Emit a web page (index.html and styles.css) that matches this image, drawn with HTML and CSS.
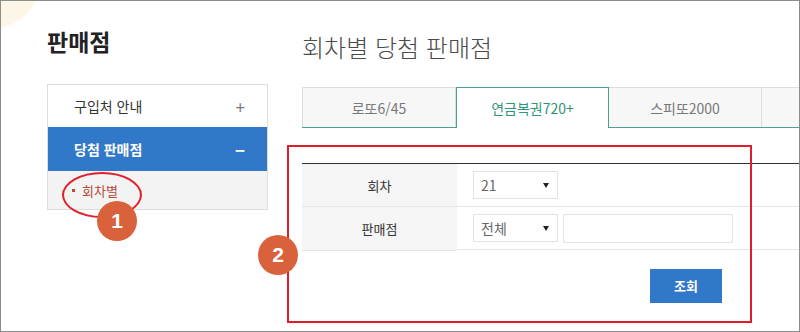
FILE: index.html
```html
<!DOCTYPE html>
<html lang="ko">
<head>
    <meta charset="UTF-8">
    <title>회차별 당첨 판매점</title>
    <link rel="stylesheet" href="styles.css">
</head>
<body>
    <div class="frame">
        <div class="deco"></div>

        <div class="layout">
            <!-- Left menu -->
            <aside class="sidebar">
                <h2 class="side-title">판매점</h2>
                <ul class="side-menu">
                    <li class="menu-item">
                        <span>구입처 안내</span>
                        <span class="sign">+</span>
                    </li>
                    <li class="menu-item active">
                        <span>당첨 판매점</span>
                        <span class="sign">&minus;</span>
                    </li>
                    <li class="submenu">
                        <span class="bullet"></span>회차별
                    </li>
                </ul>
            </aside>

            <!-- Content -->
            <main class="content">
                <h1 class="page-title">회차별 당첨 판매점</h1>

                <div class="tabs">
                    <div class="tab first">로또6/45</div>
                    <div class="tab active">연금복권720+</div>
                    <div class="tab">스피또2000</div>
                    <div class="tab"></div>
                </div>

                <table class="search-table">
                    <tr>
                        <th>회차</th>
                        <td>
                            <div class="select">21<span class="caret"></span></div>
                        </td>
                    </tr>
                    <tr>
                        <th>판매점</th>
                        <td class="row-fields">
                            <div class="select">전체<span class="caret"></span></div>
                            <input type="text" class="text-input">
                        </td>
                    </tr>
                </table>

                <div class="actions">
                    <button class="btn-search">조회</button>
                </div>
            </main>
        </div>

        <!-- Annotations -->
        <div class="mark-ellipse"></div>
        <div class="mark-rect"></div>
        <div class="badge badge-1">1</div>
        <div class="badge badge-2">2</div>
    </div>
</body>
</html>
```

FILE: styles.css
```css
/* General */
* {
    box-sizing: border-box;
}

body {
    margin: 0;
    font-family: "Noto Sans CJK KR", "Noto Sans", sans-serif;
    color: #333;
    background: #fff;
}

.frame {
    position: relative;
    width: 800px;
    height: 332px;
    border: 1px solid #8c8c8c;
    overflow: hidden;
    background: #fff;
}

/* faint circle in the corner */
.deco {
    position: absolute;
    left: -60px;
    top: -72px;
    width: 100px;
    height: 100px;
    border-radius: 50%;
    background: #fdf6e6;
}

.layout {
    display: flex;
    gap: 34px;
    padding-left: 46px;
}

/* Sidebar */
.sidebar {
    flex: 0 0 221px;
}

.side-title {
    margin: 27px 0 29px;
    font-size: 23px;
    line-height: 27px;
    font-weight: bold;
    color: #222;
}

.side-menu {
    list-style: none;
    margin: 0;
    padding: 0;
    border: 1px solid #ddd;
}

.menu-item {
    display: flex;
    justify-content: space-between;
    align-items: center;
    height: 42px;
    padding: 0 22px 0 26px;
    font-size: 14px;
    color: #333;
}

.menu-item .sign {
    font-size: 17px;
    color: #777;
}

.menu-item.active {
    height: 44px;
    background: #3278c8;
    color: #fff;
    font-weight: bold;
}

.menu-item.active .sign {
    color: #fff;
}

.submenu {
    display: flex;
    align-items: center;
    height: 38px;
    padding-left: 24px;
    background: #f3f3f3;
    font-size: 13px;
    color: #b84a3a;
}

.bullet {
    width: 3px;
    height: 3px;
    background: #b84a3a;
    margin-right: 7px;
}

/* Content */
.content {
    flex: 0 0 620px;
}

.page-title {
    margin: 31px 0 26px;
    font-size: 24px;
    line-height: 29px;
    font-weight: 300;
    color: #4a4a4a;
}

.tabs {
    display: flex;
    border-bottom: 1px solid #4aa08d;
}

.tab {
    width: 153px;
    height: 40px;
    display: flex;
    align-items: center;
    justify-content: center;
    background: #f7f7f7;
    border-top: 1px solid #ddd;
    border-right: 1px solid #ddd;
    font-size: 14px;
    color: #777;
}

.tab.first {
    width: 154px;
    border-left: 1px solid #ddd;
}

.tab.active {
    height: 41px;
    margin-bottom: -1px;
    background: #fff;
    border: 1px solid #4aa08d;
    border-bottom: none;
    color: #2f9479;
}

/* Search table */
.search-table {
    width: 100%;
    margin-top: 35px;
    border-collapse: collapse;
    border-top: 1px solid #333;
}

.search-table th,
.search-table td {
    height: 43px;
    border-bottom: 1px solid #e5e5e5;
    padding: 0;
}

.search-table th {
    width: 155px;
    background: #f5f5f5;
    font-size: 13px;
    font-weight: normal;
    color: #333;
}

.search-table td {
    padding-left: 16px;
}

.row-fields {
    display: flex;
    align-items: center;
    gap: 5px;
}

.select {
    position: relative;
    width: 85px;
    height: 28px;
    padding-left: 7px;
    border: 1px solid #e2e2e2;
    font-size: 14px;
    line-height: 26px;
    color: #666;
}

.caret {
    position: absolute;
    right: 8px;
    top: 11px;
    border-left: 3.5px solid transparent;
    border-right: 3.5px solid transparent;
    border-top: 5px solid #222;
}

.text-input {
    width: 170px;
    height: 29px;
    border: 1px solid #e2e2e2;
    font-size: 13px;
}

.actions {
    padding: 18px 0 0 348px;
}

.btn-search {
    width: 72px;
    height: 34px;
    border: none;
    background: #3278c8;
    color: #fff;
    font-family: inherit;
    font-size: 13px;
    font-weight: bold;
    cursor: pointer;
}

/* Annotations */
.mark-ellipse {
    position: absolute;
    left: 61px;
    top: 171px;
    width: 80px;
    height: 46px;
    border: 2px solid #e0202a;
    border-radius: 50%;
}

.mark-rect {
    position: absolute;
    left: 286px;
    top: 144px;
    width: 465px;
    height: 178px;
    border: 2px solid #e01e2a;
}

.badge {
    position: absolute;
    width: 40px;
    height: 40px;
    border-radius: 50%;
    background: #d9613c;
    color: #fff;
    font-family: "Liberation Sans", sans-serif;
    font-size: 21px;
    font-weight: bold;
    line-height: 40px;
    text-align: center;
}

.badge-1 {
    left: 96px;
    top: 200px;
}

.badge-2 {
    left: 257px;
    top: 234px;
}
```
